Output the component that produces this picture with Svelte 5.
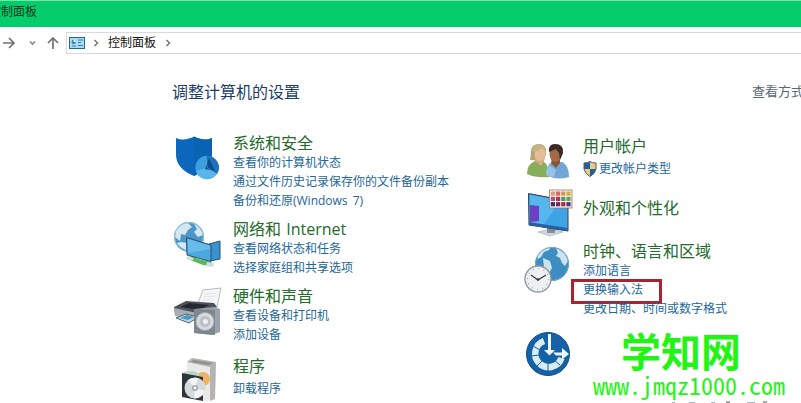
<script lang="ts">
  type Category = { icon: string; title: string; links: string[]; shield?: boolean; marked?: number };

  const left: Category[] = [
    {
      icon: "security",
      title: "系统和安全",
      links: ["查看你的计算机状态", "通过文件历史记录保存你的文件备份副本", "备份和还原(Windows 7)"],
    },
    { icon: "network", title: "网络和 Internet", links: ["查看网络状态和任务", "选择家庭组和共享选项"] },
    { icon: "hardware", title: "硬件和声音", links: ["查看设备和打印机", "添加设备"] },
    { icon: "programs", title: "程序", links: ["卸载程序"] },
  ];

  const right: Category[] = [
    { icon: "users", title: "用户帐户", links: ["更改帐户类型"], shield: true },
    { icon: "display", title: "外观和个性化", links: [] },
    {
      icon: "clock",
      title: "时钟、语言和区域",
      links: ["添加语言", "更换输入法", "更改日期、时间或数字格式"],
      marked: 1,
    },
    { icon: "ease", title: "", links: [] },
  ];

  const swatches = [
    "#d9a07c", "#e0655e", "#dc9350", "#c8b04a",
    "#c2477e", "#b8324f", "#4f9a63", "#6ca04b",
    "#35307c", "#73255f", "#a52f46", "#3f3b86",
  ];
</script>

{#snippet icon(name: string)}
  <svg class="icon" viewBox="0 0 48 48">
    {#if name === "security"}
      <path d="M4 4C11 7 17 5 22 2.500C27 5 33 7 40 4V21C39 31 31 38 22 42C12 38 4 31 4 21Z" fill="#0b68bd" />
      <path d="M22 2.500C27 5 33 7 40 4V21C39 31 31 38 22 42Z" fill="#0a62b3" />
      <circle cx="35" cy="33.500" r="11.700" fill="#3a9fdc" />
      <path d="M24 37Q26 44 35 45.200Q41 45 45 40L35 33.500Z" fill="#58b6e8" />
      <path d="M35 33.500L34 22A11.700 11.700 0 0 1 45 40Z" fill="#1c73bb" />
      <path d="M33 35L37 24L43 37Z" fill="#0a4c8e" />
      <path d="M35 33.500L34 22M35 33.500L45 40" stroke="#6dbde8" stroke-width="0.500" />
    {:else if name === "network"}
      <circle cx="17" cy="17" r="15" fill="#4d96c6" />
      <path d="M4 10Q9 3 16 3L20 7L16 10L13 15L9 14L8 21L3 17ZM22 4Q29 7 31 15L26 17L22 12L25 9ZM9 22L15 23L14 30Q8 28 5 23Z" fill="#d5e8f0" />
      <circle cx="17" cy="17" r="14.500" fill="none" stroke="#9cc5de" />
      <path d="M19 35L26 39L40 42L38 46L31 45L18 40Z" fill="#58b95c" />
      <path d="M16 36L22 38L20 41L14 39ZM35 42L42 43L41 47L34 46Z" fill="#d5dcd9" />
      <path d="M37 24L48 21V39L38 41Z" fill="#3c91cf" stroke="#245273" />
      <path d="M14.500 17.500L39 25V41.500L15 35Z" fill="#4ba9e2" stroke="#285271" />
      <path d="M16 19L38 26V29L16 33Z" fill="#69bbea" />
    {:else if name === "hardware"}
      <path d="M31 3L49 1L45 20L25 19Z" fill="#f5f6f6" stroke="#b9bdc1" />
      <path d="M32 7L44 6M31 10L43 9M30 13L42 12" stroke="#e2e5e8" />
      <path d="M2 20L14 14L42 16L45 20L25 31L3 27Z" fill="#50545a" />
      <path d="M8 20L17 16L37 18L28 23Z" fill="#25292f" />
      <path d="M2 21L25 26V35L3 29Z" fill="#a6adb4" />
      <path d="M4 31L14 27L26 30L17 36Z" fill="#b8d8e8" stroke="#59656e" />
      <path d="M8 31L15 28L22 30L16 33Z" fill="#4b9bc0" />
      <path d="M22 22L43 20L48 22V45L40 48L22 46Z" fill="#9ba3ab" />
      <path d="M22 22L43 23V48L22 46Z" fill="#7e868e" />
      <circle cx="33" cy="34.500" r="9" fill="#d7dbde" stroke="#a4aab0" />
      <circle cx="33" cy="34.500" r="5.500" fill="#bac0c5" />
      <circle cx="33.500" cy="34.500" r="2.500" fill="#eef0f1" />
    {:else if name === "programs"}
      <path d="M15 5L20 1L44 5L43 42L34 44L15 40Z" fill="#e9e9e8" />
      <path d="M15 5L20 1L44 5L38 10Z" fill="#b4b3b1" />
      <path d="M19 5L21 3L41 6L37 8Z" fill="#8d8e90" />
      <path d="M38 9L44 5L43 42L38 44Z" fill="#b6b4b3" />
      <circle cx="31" cy="22" r="7" fill="#eeb269" />
      <path d="M12 15Q24 12 28 19L24 24H12Z" fill="#b8d5c9" />
      <path d="M10 16L31 20V44L10 40Z" fill="#30343b" />
      <circle cx="23" cy="31" r="10.500" fill="#d5dadc" />
      <path d="M23 31L16 23Q21 20 26 21ZM23 31L33 34Q30 41 22 41.500Z" fill="#f3f5f5" />
      <circle cx="23" cy="31" r="3" fill="#9ea7ae" />
      <circle cx="23" cy="31" r="1.400" fill="#fff" />
    {:else if name === "users"}
      <path d="M6 24Q7 19 7 14Q9 7 16 8Q23 9 22 18L20 25Z" fill="#b6a473" />
      <path d="M3 38Q3 28 11 25L19 25Q25 29 25 41Q12 42 3 38Z" fill="#87ae59" />
      <path d="M11 25L17 30L20 25V20H11Z" fill="#d9ac83" />
      <ellipse cx="16" cy="18" rx="5.500" ry="7" fill="#e5bd97" />
      <path d="M8 16Q15 16 18 11Q21 15 22 18Q23 9 16 8Q9 8 8 16Z" fill="#c5b485" />
      <path d="M22 39Q22 28 29 26H38Q45 29 45 41Q33 45 22 39Z" fill="#72a6d7" />
      <path d="M27 27L32 32L36 27V22H28Z" fill="#8b5438" />
      <ellipse cx="31.500" cy="18" rx="6" ry="8" fill="#a36848" />
      <path d="M25 16Q24 8 31 8Q40 8 39 17L36 24L35 17L32 13Z" fill="#3c2925" />
      <path d="M25 29L32 34L30 41Q25 41 22 39Q22 32 25 29Z" fill="#98c3e8" />
    {:else if name === "display"}
      <path d="M14 44L27 41L39 44L26 48Z" fill="#d3d8dd" stroke="#9ca5ae" stroke-width="0.600" />
      <path d="M23 39H31V45H23Z" fill="#858e98" />
      <path d="M4.500 5.500L44 13V43L5 37Z" fill="#3fa4e6" stroke="#333f4c" />
      <path d="M6 7L36 13L18 39L6 36Z" fill="#56b6ef" />
      <path d="M6 17L15 18V33L6 34Z" fill="#6c3fc4" />
      <path d="M5 34L43 40V43L5 37Z" fill="#2561a1" />
      <rect x="25.500" y="2" width="22.500" height="18" fill="#fbf5ef" stroke="#9d735c" stroke-width="0.800" />
      {#each swatches as color, i}
        <rect x={26.8 + (i % 4) * 5.2} y={3.5 + Math.floor(i / 4) * 5.3} width="4.200" height="4.200" fill={color} />
      {/each}
    {:else if name === "clock"}
      <circle cx="28" cy="18" r="17" fill="#3e8dc1" />
      <path d="M13 10Q17 2 27 1L25 4L20 6L17 11L14 13ZM32 2Q42 6 44 15L41 20L38 17L36 12L32 10L34 7ZM19 12L26 15L28 22L25 27L20 21Z" fill="#cde4ef" />
      <circle cx="28" cy="18" r="16.500" fill="none" stroke="#78add0" />
      <circle cx="14" cy="33" r="13" fill="#eef1f2" stroke="#929a9f" stroke-width="1.400" />
      <circle cx="14" cy="33" r="10.500" fill="none" stroke="#8d969b" stroke-width="1.200" stroke-dasharray="0.800 4.700" />
      <path d="M7 29L14 34L22 29" fill="none" stroke="#363b41" stroke-width="1.300" />
      <circle cx="14" cy="33.500" r="1.300" fill="#363b41" />
    {:else}
      <circle cx="24" cy="24" r="21.500" fill="#1561a6" stroke="#0d4d8b" />
      <path d="M20 11A13.500 13.500 0 1 0 37.500 28" fill="none" stroke="#d9edf8" stroke-width="6.500" />
      <path d="M9 16L16 20M7 26L15 25M12 37L18 31M24 42V34M36 35L30 30" stroke="#1561a6" />
      <path d="M24 4H27V20H31L25.500 25.500L20 20H24Z" fill="#edf8ff" />
      <path d="M29 22.500H38V18L45 24L38 29.500V25.500H32Z" fill="#edf8ff" />
    {/if}
  </svg>
{/snippet}

{#snippet column(items: Category[])}
  {#each items as item}
    <section class="category {item.icon}">
      {@render icon(item.icon)}
      <div class="text">
        {#if item.title}<h2>{item.title}</h2>{/if}
        {#each item.links as link, i}
          <div class="link" class:marked={item.marked === i}>
            {#if item.shield}
              <svg class="uac" viewBox="0 0 14 16">
                <path d="M1 2Q5 2 7 .5Q9 2 13 2V8Q12 13 7 15.500Q2 13 1 8Z" fill="#e6cd86" />
                <path d="M1 2Q5 2 7 .5V8H1ZM7 8H13Q12 13 7 15.500Z" fill="#235f9c" />
                <path d="M1 2Q5 2 7 .5Q9 2 13 2V8Q12 13 7 15.500Q2 13 1 8Z" fill="none" stroke="#4c5a65" />
              </svg>
            {/if}
            <span>{link}</span>
          </div>
        {/each}
      </div>
    </section>
  {/each}
{/snippet}

<div class="window">
  <header class="titlebar"><span>控制面板</span></header>

  <nav class="toolbar">
    <svg class="nav-icons" viewBox="0 0 66 22">
      <path d="M3 11H14M9 6L14 11L9 16" fill="none" stroke="#737373" stroke-width="1.700" />
      <path d="M30 9.500L32.500 12L35 9.500" fill="none" stroke="#8a8a8a" stroke-width="1.700" />
      <path d="M53 17V6M48 11L53 6L58 11" fill="none" stroke="#737373" stroke-width="1.700" />
    </svg>
    <div class="address">
      <svg class="panel" viewBox="0 0 16 12">
        <rect x=".5" y=".5" width="15" height="11" fill="#a9dcf1" stroke="#246b91" />
        <circle cx="4.700" cy="5" r="2.200" fill="#3a88b5" />
        <path d="M4.700 5V2.500A2.500 2.500 0 0 1 7 5Z" fill="#e9f8fd" />
        <path d="M9 3H14M9 5.500H12M3 9H7M9 8.500H14" stroke="#377fa9" />
      </svg>
      <svg class="chevron" viewBox="0 0 6 8"><path d="M1.500 1L4.500 4L1.500 7" /></svg>
      <span>控制面板</span>
      <svg class="chevron" viewBox="0 0 6 8"><path d="M1.500 1L4.500 4L1.500 7" /></svg>
    </div>
  </nav>

  <main>
    <div class="heading">
      <h1>调整计算机的设置</h1>
      <span class="view">查看方式</span>
    </div>
    <div class="columns">
      <div class="left">{@render column(left)}</div>
      <div class="right">{@render column(right)}</div>
    </div>
  </main>

  <div class="watermark">
    <strong>学知网</strong>
    <span>www.jmqz1000.com</span>
  </div>
  <svg class="specks" viewBox="0 0 100 4">
    <path d="M1 3.500H4M18 3.500H24M40 3.500H44M76 3.500H84" stroke="#a9bac8" />
    <path d="M55 3H59M92 3H96" stroke="#555" />
  </svg>
</div>

<style>
  :global(body) {
    margin: 0;
    overflow: hidden;
  }
  .window {
    position: relative;
    width: 801px;
    height: 403px;
    overflow: hidden;
    background: #fff;
    color: #222;
    font-family: "Open Sans", "Noto Sans CJK SC", sans-serif;
    font-size: 12px;
  }
  .titlebar {
    box-sizing: border-box;
    height: 27px;
    border-top: 1px solid #7be3ad;
    background: #06cd6b;
    color: #0b3820;
    line-height: 22px;
    white-space: nowrap;
  }
  .titlebar span {
    margin-left: -11px;
  }
  .toolbar {
    display: flex;
    height: 22px;
    padding-top: 5px;
  }
  .nav-icons {
    width: 66px;
    height: 22px;
  }
  .address {
    display: flex;
    flex: 1;
    align-items: center;
    box-sizing: border-box;
    padding-left: 2px;
    border: 1px solid #d9d9d9;
    border-right: 0;
    color: #111;
    line-height: 18px;
  }
  .address span {
    margin: 0 9px;
  }
  .panel {
    width: 16px;
    height: 12px;
    margin-right: 8px;
  }
  .chevron {
    width: 6px;
    height: 8px;
    fill: none;
    stroke: #777;
    stroke-width: 1.5;
  }
  main {
    padding-left: 172px;
  }
  .heading {
    display: flex;
    height: 80px;
    box-sizing: border-box;
    padding-top: 27px;
    white-space: nowrap;
  }
  h1 {
    width: 580px;
    flex: none;
    margin: 0;
    color: #1c3c68;
    font-size: 16px;
    font-weight: 400;
    line-height: 22px;
  }
  .view {
    color: #58677a;
    font-size: 13px;
    line-height: 20px;
  }
  .columns {
    display: grid;
    grid-template-columns: 352px 1fr;
  }
  .right {
    padding-top: 2px;
  }
  .category {
    display: flex;
    gap: 13px;
  }
  .right .category {
    gap: 11px;
  }
  .icon {
    flex: none;
    width: 48px;
    height: 48px;
    overflow: visible;
  }
  .security {
    height: 86px;
  }
  .network {
    height: 67px;
  }
  .hardware {
    height: 70px;
  }
  .users {
    height: 52px;
  }
  .display {
    height: 54px;
  }
  .clock {
    height: 88px;
  }
  .clock .icon {
    margin-top: 4px;
  }
  .display .text {
    padding-top: 11px;
  }
  .users .text {
    padding-top: 1px;
  }
  .users h2,
  .programs h2 {
    margin-bottom: 3px;
  }
  h2 {
    margin: 0;
    color: #236b2b;
    font-size: 16px;
    font-weight: 400;
    line-height: 19px;
    white-space: nowrap;
    word-spacing: 1px;
  }
  .link {
    position: relative;
    display: flex;
    align-items: center;
    height: 19px;
    color: #236699;
    line-height: 19px;
    white-space: nowrap;
    word-spacing: 2px;
  }
  .marked::after {
    position: absolute;
    top: -1px;
    left: -12px;
    width: 85px;
    height: 19px;
    border: 3px solid #a5262f;
    content: "";
  }
  .uac {
    width: 14px;
    height: 16px;
    margin-right: 2px;
  }
  .watermark {
    position: absolute;
    top: 326px;
    left: 593px;
    display: flex;
    flex-direction: column;
    color: #22f514;
  }
  .watermark strong {
    margin-left: 28px;
    font-family: "Noto Sans CJK SC", sans-serif;
    font-size: 40px;
    font-weight: 700;
    line-height: 48px;
  }
  .watermark span {
    margin-top: -1px;
    font-family: "Noto Sans Mono CJK SC", "Liberation Mono", monospace;
    font-size: 24px;
    line-height: 24px;
  }
  .specks {
    position: absolute;
    top: 399px;
    left: 671px;
    width: 100px;
    height: 4px;
  }
</style>
